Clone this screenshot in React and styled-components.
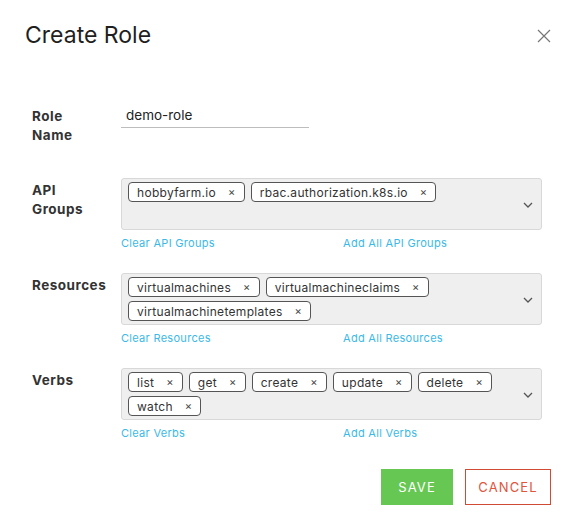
import React from "react";
import styled, {createGlobalStyle} from "styled-components";

const GlobalStyle = createGlobalStyle`
  html, body {
    margin: 0;
    padding: 0;
    background: #fff;
    font-family: Inter, "DejaVu Sans", sans-serif;
  }
`;

const Modal = styled.div({
  width: '573px',
  height: '528px',
  boxSizing: 'border-box',
  padding: '20px 22px 0 25px',
  display: 'flex',
  flexDirection: 'column',
});

const Header = styled.div({
  display: 'flex',
  alignItems: 'center',
  justifyContent: 'space-between',
  height: '30px',
});

const Title = styled.h2({
  margin: 0,
  fontSize: '23px',
  fontWeight: 400,
  color: '#1f1f1f',
});

const Close = styled.button({
  border: 'none',
  background: 'none',
  padding: 0,
  width: '14px',
  height: '14px',
  display: 'flex',
  marginTop: '1px',
  cursor: 'pointer',
});

const Form = styled.div({
  marginTop: '54px',
  paddingLeft: '7px',
  display: 'flex',
  flexDirection: 'column',
});

const Row = styled.div(p => ({
  display: 'flex',
  marginBottom: p.gap || '0px',
}));

const Label = styled.div({
  width: '89px',
  flexShrink: 0,
  fontSize: '13.5px',
  letterSpacing: '0.5px',
  fontWeight: 700,
  color: '#333',
  lineHeight: '19px',
  paddingTop: '3px',
});

const Field = styled.div({
  flex: 1,
  display: 'flex',
  flexDirection: 'column',
});

const TextInput = styled.input({
  width: '188px',
  boxSizing: 'border-box',
  border: 'none',
  borderBottom: '1px solid #bdbdbd',
  outline: 'none',
  fontFamily: 'inherit',
  fontSize: '13.5px',
  color: '#222',
  padding: '3px 5px 4px',
});

const SelectBox = styled.div({
  boxSizing: 'border-box',
  width: '421px',
  height: '52px',
  background: '#efefef',
  border: '1px solid #d8d8d8',
  borderRadius: '3px',
  padding: '3px 30px 3px 6px',
  position: 'relative',
  display: 'flex',
  flexWrap: 'wrap',
  alignContent: 'flex-start',
  gap: '4px 6px',
});

const Chevron = styled.span({
  position: 'absolute',
  right: '8px',
  top: '23px',
  display: 'flex',
});

const Chip = styled.span({
  height: '20px',
  boxSizing: 'border-box',
  border: '1px solid #555',
  borderRadius: '4px',
  background: '#fff',
  display: 'inline-flex',
  alignItems: 'center',
  padding: '0 8px',
  fontSize: '12px',
  letterSpacing: '0.3px',
  color: '#333',
});

const ChipX = styled.span({
  marginLeft: '12px',
  fontSize: '11px',
  color: '#444',
});

const Links = styled.div({
  display: 'grid',
  gridTemplateColumns: '222px auto',
  marginTop: '6px',
});

const Link = styled.a({
  fontSize: '11px',
  letterSpacing: '0.3px',
  color: '#3bb9e8',
  cursor: 'pointer',
});

const Footer = styled.div({
  display: 'flex',
  justifyContent: 'flex-end',
  gap: '12px',
  marginTop: '29px',
});

const Button = styled.button(p => ({
  height: '36px',
  boxSizing: 'border-box',
  padding: '0 12px',
  minWidth: p.outline ? '86px' : '72px',
  fontFamily: 'inherit',
  fontSize: '13px',
  letterSpacing: '1.1px',
  border: p.outline ? '1px solid #d14a33' : 'none',
  background: p.outline ? '#fff' : '#66c752',
  color: p.outline ? '#e0553c' : '#fff',
  cursor: 'pointer',
}));

function ChipSelect({items, clear, add}) {
  return (
    <Field>
      <SelectBox>
        {items.map(i => (
          <Chip key={i}>{i}<ChipX>×</ChipX></Chip>
        ))}
        <Chevron>
          <svg width="10" height="6" viewBox="0 0 10 6" fill="none" stroke="#555" strokeWidth="1.3">
            <path d="M1 1l4 4 4-4" />
          </svg>
        </Chevron>
      </SelectBox>
      <Links>
        <Link>{clear}</Link>
        <Link>{add}</Link>
      </Links>
    </Field>
  );
}

export default function App() {
  return (
    <>
      <GlobalStyle />
      <Modal>
        <Header>
          <Title>Create Role</Title>
          <Close>
            <svg width="14" height="14" viewBox="0 0 14 14" stroke="#777" strokeWidth="1.2">
              <path d="M1 1l12 12M13 1L1 13" />
            </svg>
          </Close>
        </Header>
        <Form>
          <Row gap="33px">
            <Label>Role<br />Name</Label>
            <Field>
              <TextInput defaultValue="demo-role" />
            </Field>
          </Row>
          <Row gap="23px">
            <Label>API<br />Groups</Label>
            <ChipSelect
              items={["hobbyfarm.io", "rbac.authorization.k8s.io"]}
              clear="Clear API Groups"
              add="Add All API Groups"
            />
          </Row>
          <Row gap="23px">
            <Label>Resources</Label>
            <ChipSelect
              items={["virtualmachines", "virtualmachineclaims", "virtualmachinetemplates"]}
              clear="Clear Resources"
              add="Add All Resources"
            />
          </Row>
          <Row>
            <Label>Verbs</Label>
            <ChipSelect
              items={["list", "get", "create", "update", "delete", "watch"]}
              clear="Clear Verbs"
              add="Add All Verbs"
            />
          </Row>
        </Form>
        <Footer>
          <Button>SAVE</Button>
          <Button outline>CANCEL</Button>
        </Footer>
      </Modal>
    </>
  );
}
